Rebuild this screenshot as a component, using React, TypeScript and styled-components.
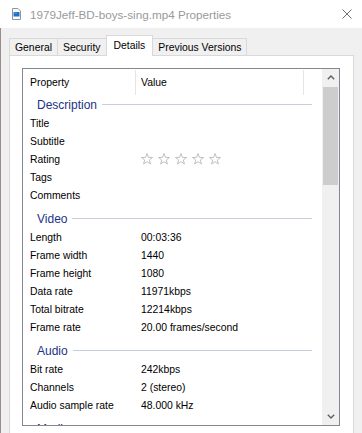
import React from "react";
import styled, { createGlobalStyle } from "styled-components";

const Global = createGlobalStyle`
  html, body { margin: 0; padding: 0; background: #f0f0f0; overflow: hidden; }
  * { box-sizing: border-box; }
`;

const Window = styled.div`
  width: 362px;
  height: 433px;
  overflow: hidden;
  display: flex;
  flex-direction: column;
  background: #f0f0f0;
  font-family: "Liberation Sans", Arial, sans-serif;
  color: #000;
`;

const TitleBar = styled.div`
  height: 28px;
  flex-shrink: 0;
  background: #ffffff;
  display: flex;
  align-items: center;
  gap: 9px;
  padding: 0 10px 0 12px;
`;

const TitleText = styled.div`
  flex: 1;
  font-size: 11.7px;
  color: #9a9a9a;
  white-space: nowrap;
`;

const Body = styled.div`
  flex: 1;
  display: flex;
  flex-direction: column;
  border-left: 1px solid #9a8c8c;
  padding: 7px 8px 0 8px;
  min-height: 0;
`;

const TabStrip = styled.div`
  display: flex;
  align-items: flex-end;
  height: 20px;
  flex-shrink: 0;
`;

const Tab = styled.div<{ $active?: boolean }>`
  position: relative;
  display: flex;
  align-items: center;
  height: ${(p) => (p.$active ? "21px" : "17px")};
  margin-bottom: ${(p) => (p.$active ? "-1px" : "0")};
  padding: ${(p) => (p.$active ? "0 7px 2px" : "0 5px")};
  margin-left: -1px;
  border: 1px solid #d9d9d9;
  border-bottom: none;
  background: ${(p) => (p.$active ? "#ffffff" : "#f0f0f0")};
  z-index: ${(p) => (p.$active ? 1 : 0)};
  font-size: 10.4px;
  white-space: nowrap;
  &:first-child { margin-left: 0; }
`;

const Panel = styled.div`
  flex: 1;
  background: #ffffff;
  border: 1px solid #d9d9d9;
  padding: 12px 13px 12px 12px;
`;

const ListBox = styled.div`
  height: 358px;
  border: 1px solid #828790;
  display: flex;
  background: #ffffff;
`;

const Content = styled.div`
  flex: 1;
  min-width: 0;
  overflow: hidden;
  display: flex;
  flex-direction: column;
`;

const Header = styled.div`
  display: flex;
  height: 26px;
  flex-shrink: 0;
`;

const HeaderCell = styled.div<{ $w: number; $pad: number }>`
  width: ${(p) => p.$w}px;
  padding-left: ${(p) => p.$pad}px;
  border-right: 1px solid #e5e5e5;
  display: flex;
  align-items: center;
  font-size: 10.4px;
  margin-top: 1px;
`;

const Group = styled.div<{ $first?: boolean }>`
  display: flex;
  align-items: center;
  flex-shrink: 0;
  height: ${(p) => (p.$first ? "19px" : "24px")};
  padding-top: ${(p) => (p.$first ? "0" : "5px")};
`;

const GroupTitle = styled.span`
  padding-left: 14px;
  font-size: 12px;
  color: #1e3287;
  white-space: nowrap;
`;

const GroupLine = styled.div`
  flex: 1;
  height: 1px;
  background: #c6cddc;
  margin: 0 10px 0 5px;
`;

const Row = styled.div`
  display: grid;
  grid-template-columns: 113px 1fr;
  height: 18px;
  flex-shrink: 0;
  align-items: center;
  font-size: 10.4px;
  white-space: nowrap;
`;

const Label = styled.div`
  padding-left: 7px;
`;

const Value = styled.div`
  padding-left: 5px;
  display: flex;
  align-items: center;
  gap: 5px;
`;

const ScrollBar = styled.div`
  width: 17px;
  flex-shrink: 0;
  background: #f0f0f0;
  display: flex;
  flex-direction: column;
`;

const ScrollButton = styled.div`
  height: 17px;
  flex-shrink: 0;
  display: flex;
  align-items: center;
  justify-content: center;
`;

const Thumb = styled.div`
  height: 98px;
  margin: 1px 1px 0;
  background: #cdcdcd;
  flex-shrink: 0;
`;

const Track = styled.div`
  flex: 1;
`;

const FileIcon = () => (
  <svg width="9" height="12" viewBox="0 0 9 12">
    <path d="M0.5 0.5 H6 L8.5 3 V11.5 H0.5 Z" fill="#ffffff" stroke="#8b95a5" strokeWidth="1" />
    <rect x="1.5" y="4" width="6" height="4.5" fill="#1f6fc5" />
    <rect x="2" y="4.5" width="3" height="1" fill="#5aa0e6" />
  </svg>
);

const CloseIcon = () => (
  <svg width="10" height="10" viewBox="0 0 10 10">
    <path d="M0.5 0.5 L9.5 9.5 M9.5 0.5 L0.5 9.5" stroke="#6f6f6f" strokeWidth="1" fill="none" />
  </svg>
);

const Star = () => (
  <svg width="12" height="12" viewBox="0 0 12 12">
    <polygon
      points="6,0.5 7.41,4.36 11.52,4.51 8.28,7.04 9.41,10.99 6,8.7 2.59,10.99 3.72,7.04 0.48,4.51 4.59,4.36"
      fill="#ffffff"
      stroke="#b9b9b9"
      strokeWidth="0.9"
      strokeLinejoin="round"
    />
  </svg>
);

const Chevron = ({ down }: { down?: boolean }) => (
  <svg width="8" height="5" viewBox="0 0 8 5">
    <path
      d={down ? "M0.8 0.8 L4 4 L7.2 0.8" : "M0.8 4.2 L4 1 L7.2 4.2"}
      stroke="#606060"
      strokeWidth="1.4"
      fill="none"
    />
  </svg>
);

type Item = { label: string; value?: React.ReactNode };
type Section = { title: string; items: Item[] };

const sections: Section[] = [
  {
    title: "Description",
    items: [
      { label: "Title" },
      { label: "Subtitle" },
      {
        label: "Rating",
        value: (
          <>
            <Star />
            <Star />
            <Star />
            <Star />
            <Star />
          </>
        ),
      },
      { label: "Tags" },
      { label: "Comments" },
    ],
  },
  {
    title: "Video",
    items: [
      { label: "Length", value: "00:03:36" },
      { label: "Frame width", value: "1440" },
      { label: "Frame height", value: "1080" },
      { label: "Data rate", value: "11971kbps" },
      { label: "Total bitrate", value: "12214kbps" },
      { label: "Frame rate", value: "20.00 frames/second" },
    ],
  },
  {
    title: "Audio",
    items: [
      { label: "Bit rate", value: "242kbps" },
      { label: "Channels", value: "2 (stereo)" },
      { label: "Audio sample rate", value: "48.000 kHz" },
    ],
  },
  {
    title: "Media",
    items: [],
  },
];

const tabs = ["General", "Security", "Details", "Previous Versions"];

export default function App() {
  return (
    <>
      <Global />
      <Window>
        <TitleBar>
          <FileIcon />
          <TitleText>1979Jeff-BD-boys-sing.mp4 Properties</TitleText>
          <CloseIcon />
        </TitleBar>
        <Body>
          <TabStrip>
            {tabs.map((t) => (
              <Tab key={t} $active={t === "Details"}>
                {t}
              </Tab>
            ))}
          </TabStrip>
          <Panel>
            <ListBox>
              <Content>
                <Header>
                  <HeaderCell $w={113} $pad={7}>Property</HeaderCell>
                  <HeaderCell $w={168} $pad={5}>Value</HeaderCell>
                </Header>
                {sections.map((s, i) => (
                  <React.Fragment key={s.title}>
                    <Group $first={i === 0}>
                      <GroupTitle>{s.title}</GroupTitle>
                      <GroupLine />
                    </Group>
                    {s.items.map((it) => (
                      <Row key={it.label}>
                        <Label>{it.label}</Label>
                        <Value>{it.value}</Value>
                      </Row>
                    ))}
                  </React.Fragment>
                ))}
              </Content>
              <ScrollBar>
                <ScrollButton>
                  <Chevron />
                </ScrollButton>
                <Thumb />
                <Track />
                <ScrollButton>
                  <Chevron down />
                </ScrollButton>
              </ScrollBar>
            </ListBox>
          </Panel>
        </Body>
      </Window>
    </>
  );
}
